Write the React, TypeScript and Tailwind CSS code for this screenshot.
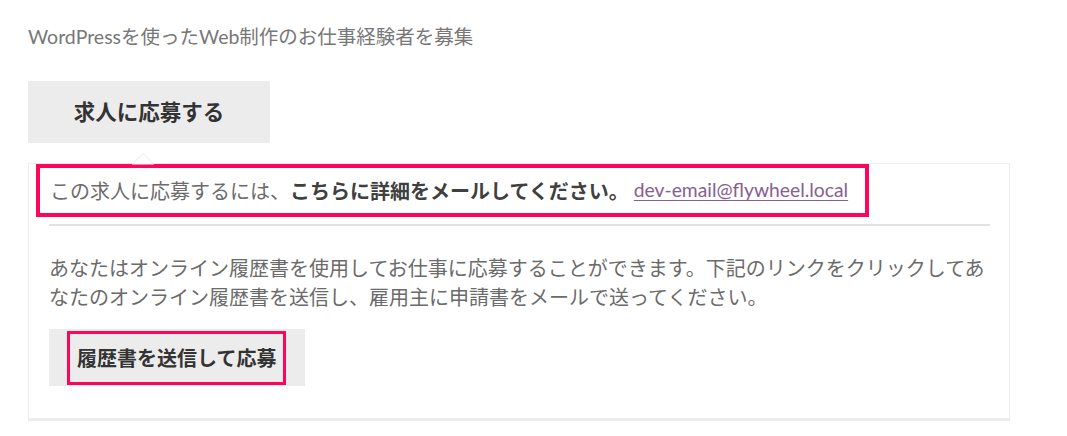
const font = { fontFamily: '"Lato", "Noto Sans CJK JP", sans-serif' };

const App = () => {
  return (
    <div className="min-h-[436px] w-[1067px] bg-white pl-[28px] pt-[22px]" style={font}>
      <p className="text-[19.5px] leading-[29px] text-[#777]">
        WordPressを使ったWeb制作のお仕事経験者を募集
      </p>

      <div className="mt-[30px] flex h-[62px] w-[242px] items-center justify-center bg-[#ececec]">
        <span className="text-[21.5px] font-bold text-[#333]">求人に応募する</span>
      </div>

      <div className="relative mt-[20px] w-[982px] border border-[#efefef] pb-[32px] pl-[20px] pr-[19px] shadow-[0_2px_0_#ececec]">
        {/* pointer */}
        <svg
          className="absolute left-[103px] top-[-11px]"
          width="22"
          height="12"
          viewBox="0 0 22 12"
        >
          <path d="M0 11.5 L11 0.5 L22 11.5" fill="#fff" stroke="#e6e6e6" strokeWidth="1" />
        </svg>

        <div className="-ml-[13px] inline-flex h-[53px] items-center border-4 border-[#ff0558] pl-[10px] pr-[17px] text-[20px] text-[#6b6b6b]">
          この求人に応募するには、
          <strong className="font-bold text-[#404040]">こちらに詳細をメールしてください。</strong>
          <a href="#" className="ml-[5px] text-[19.3px] text-[#86608e] underline underline-offset-[3px]">
            dev-email@flywheel.local
          </a>
        </div>

        <hr className="mt-[7px] h-[2px] border-0 bg-[#e2e2e2]" />

        <p className="mt-[28px] text-[20px] leading-[29px] text-[#6b6b6b]">
          あなたはオンライン履歴書を使用してお仕事に応募することができます。下記のリンクをクリックしてあなたのオンライン履歴書を送信し、雇用主に申請書をメールで送ってください。
        </p>

        <div className="mt-[17px] inline-flex bg-[#ececec] pb-[1px] pl-[18px] pr-[19px] pt-[2px]">
          <span className="flex h-[54px] items-center border-[3px] border-[#ff0558] px-[7px] text-[20px] font-bold text-[#333]">
            履歴書を送信して応募
          </span>
        </div>
      </div>
    </div>
  );
};

export default App;
